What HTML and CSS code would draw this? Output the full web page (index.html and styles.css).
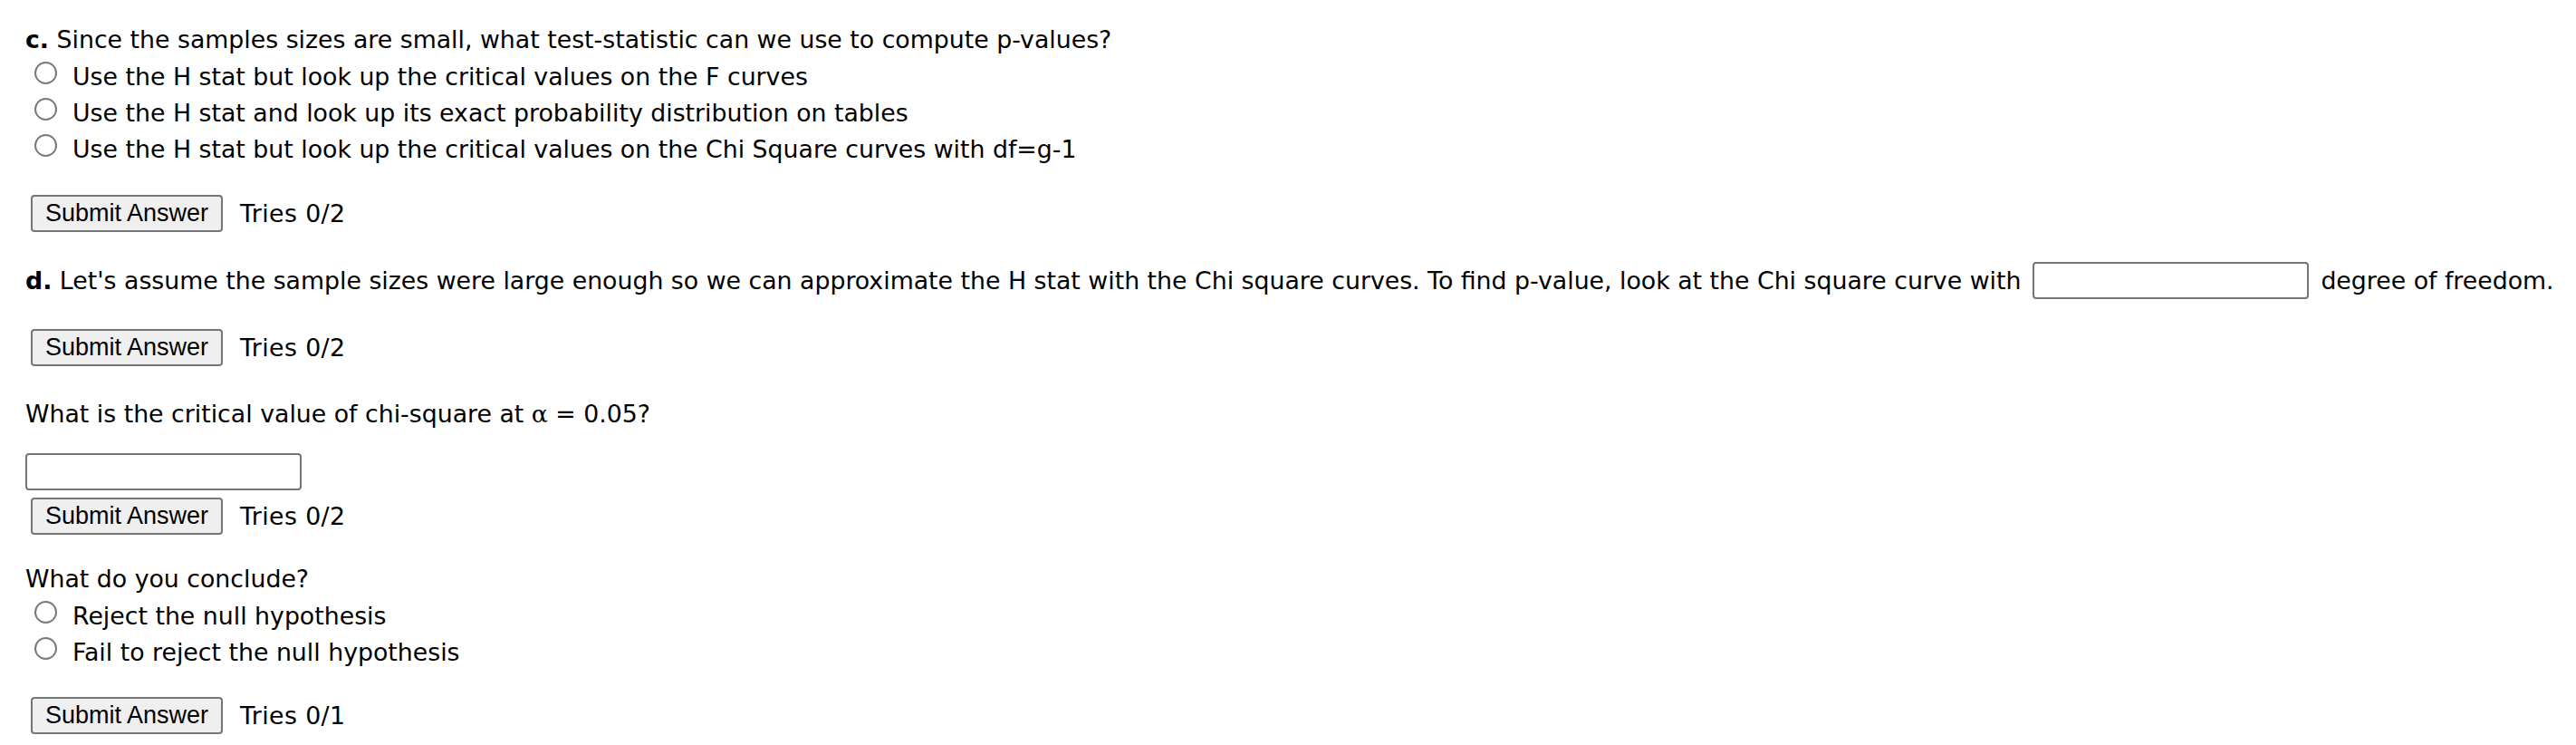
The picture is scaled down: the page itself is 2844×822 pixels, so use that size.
FILE: index.html
```html
<!DOCTYPE html>
<html>
<head>
<meta charset="utf-8">
<link rel="stylesheet" href="styles.css">
</head>
<body>
<div class="page">
  <section class="part part-c">
    <div class="q-line"><b>c.</b> Since the samples sizes are small, what test-statistic can we use to compute p-values?</div>
    <div class="options">
      <label class="option"><input type="radio" name="c" class="radio"><span>Use the H stat but look up the critical values on the F curves</span></label>
      <label class="option"><input type="radio" name="c" class="radio"><span>Use the H stat and look up its exact probability distribution on tables</span></label>
      <label class="option"><input type="radio" name="c" class="radio"><span>Use the H stat but look up the critical values on the Chi Square curves with df=g-1</span></label>
    </div>
    <div class="actions"><button class="submit">Submit Answer</button><span class="tries">Tries 0/2</span></div>
  </section>

  <section class="part part-d">
    <div class="inline-row"><span><b>d.</b> Let's assume the sample sizes were large enough so we can approximate the H stat with the Chi square curves. To find p-value, look at the Chi square curve with</span><input type="text" class="field"><span>degree of freedom.</span></div>
    <div class="actions gap33"><button class="submit">Submit Answer</button><span class="tries">Tries 0/2</span></div>
  </section>

  <section class="part part-crit">
    <div class="q-line">What is the critical value of chi-square at <span class="alpha">α</span> = 0.05?</div>
    <input type="text" class="field field-block">
    <div class="actions gap8"><button class="submit">Submit Answer</button><span class="tries">Tries 0/2</span></div>
  </section>

  <section class="part part-conclude">
    <div class="q-line">What do you conclude?</div>
    <div class="options">
      <label class="option"><input type="radio" name="e" class="radio"><span>Reject the null hypothesis</span></label>
      <label class="option"><input type="radio" name="e" class="radio"><span>Fail to reject the null hypothesis</span></label>
    </div>
    <div class="actions gap30"><button class="submit">Submit Answer</button><span class="tries">Tries 0/1</span></div>
  </section>
</div>
</body>
</html>
```

FILE: styles.css
```css
html, body {
  margin: 0;
  padding: 0;
  background: #ffffff;
}

body {
  font-family: "DejaVu Sans", Verdana, sans-serif;
  font-size: 26.75px;
  color: #000000;
}

.page {
  padding: 24px 0 0 28px;
  display: flex;
  flex-direction: column;
}

.part {
  display: flex;
  flex-direction: column;
  align-items: flex-start;
}

.part-d { margin-top: 33px; }
.part-crit { margin-top: 33px; }
.part-conclude { margin-top: 29px; }

.q-line {
  line-height: 40px;
  white-space: nowrap;
}

.options {
  display: flex;
  flex-direction: column;
}

.option {
  display: flex;
  align-items: center;
  height: 40px;
  padding-left: 10px;
  white-space: nowrap;
}

.radio {
  appearance: none;
  -webkit-appearance: none;
  width: 25px;
  height: 25px;
  margin: 0 17px 8px 0;
  border: 2px solid #7a7a7a;
  border-radius: 50%;
  background: #ffffff;
  box-sizing: border-box;
  flex: none;
}

.actions {
  display: flex;
  align-items: center;
  margin-top: 31px;
  margin-left: 6px;
}

.actions.gap33 { margin-top: 33px; }
.actions.gap8 { margin-top: 8px; }
.actions.gap30 { margin-top: 30px; }

.submit {
  font-family: "Liberation Sans", Arial, sans-serif;
  font-size: 27px;
  color: #000000;
  background: #efefef;
  border: 2px solid #767676;
  border-radius: 4px;
  width: 212px;
  height: 41px;
  padding: 0;
  box-sizing: border-box;
}

.tries {
  margin-left: 19px;
  letter-spacing: 0.4px;
}

.inline-row {
  display: flex;
  align-items: center;
  gap: 13px;
  white-space: nowrap;
}

.field {
  width: 305px;
  height: 41px;
  box-sizing: border-box;
  border: 2px solid #767676;
  border-radius: 4px;
  background: #ffffff;
  margin: 0;
  padding: 0 4px;
  font-family: "DejaVu Sans", sans-serif;
  font-size: 26.75px;
}

.field-block {
  margin-top: 23px;
}

.alpha {
  font-family: "DejaVu Serif", serif;
}
```
